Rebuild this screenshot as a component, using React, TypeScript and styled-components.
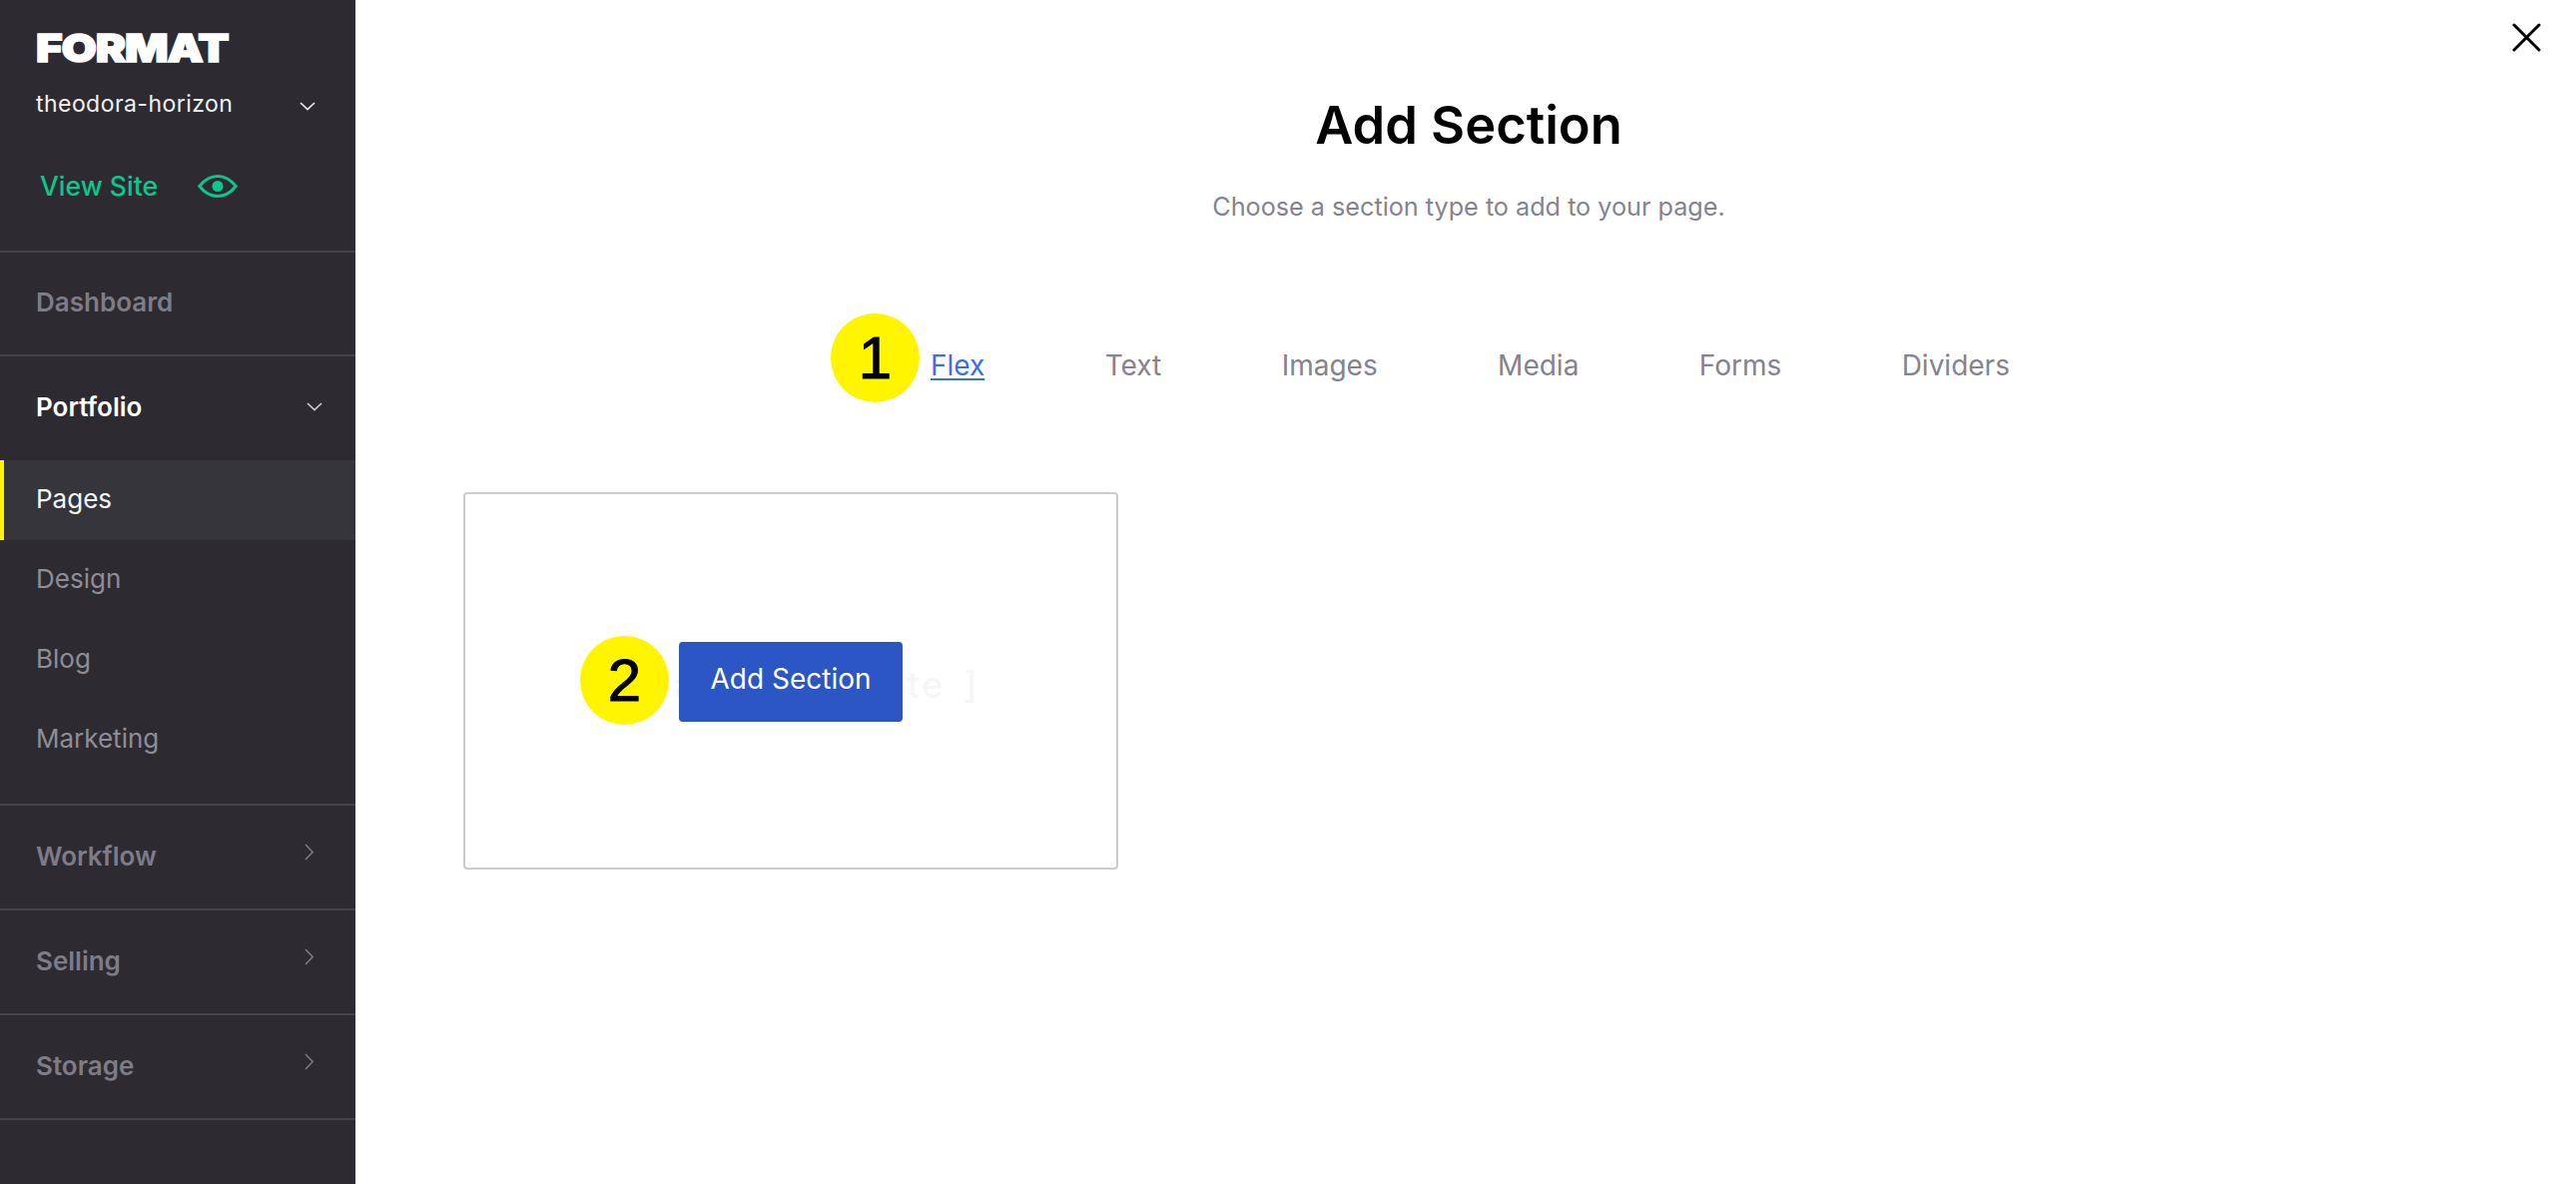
import React from "react";
import styled, { createGlobalStyle } from "styled-components";

const Global = createGlobalStyle`
  html, body { margin: 0; padding: 0; background: #fff; }
  body { font-family: Inter, "Liberation Sans", sans-serif; }
  * { box-sizing: border-box; }
`;

const Page = styled.div`
  display: flex;
  width: 2580px;
  height: 1186px;
  overflow: hidden;
  position: relative;
`;

const Sidebar = styled.aside`
  width: 356px;
  flex: none;
  height: 100%;
  background: #2d2b31;
  display: flex;
  flex-direction: column;
`;

const Brand = styled.div`
  height: 253px;
  border-bottom: 2px solid #45434a;
  padding: 28px 0 0 36px;
  display: flex;
  flex-direction: column;
`;

const Logo = styled.div`
  font-family: Inter, sans-serif;
  font-weight: 900;
  font-size: 39px;
  line-height: 40px;
  letter-spacing: -1px;
  color: #fff;
  -webkit-text-stroke: 1.5px #fff;
  transform: scaleX(1.17);
  transform-origin: left center;
`;

const SiteRow = styled.div`
  display: flex;
  align-items: center;
  justify-content: space-between;
  padding-right: 40px;
  margin-top: 16px;
  height: 40px;
  font-size: 23px;
  letter-spacing: 0.45px;
  color: #f2f2f3;
`;

const ViewRow = styled.div`
  display: flex;
  align-items: center;
  gap: 40px;
  margin: 46px 0 0 4px;
  font-size: 26.6px;
  font-weight: 500;
  color: #0cc68a;
`;

const Block = styled.div<{ $h: number }>`
  height: ${(p) => p.$h}px;
  flex: none;
  border-bottom: 2px solid #45434a;
  display: flex;
  align-items: center;
  justify-content: space-between;
  padding: 0 42px 3px 36px;
`;

const Head = styled.span<{ $on?: boolean }>`
  font-size: 26px;
  font-weight: 600;
  color: ${(p) => (p.$on ? "#fff" : "#7e7c88")};
`;

const Group = styled.div`
  flex: none;
  height: 450px;
  border-bottom: 2px solid #45434a;
  display: flex;
  flex-direction: column;
`;

const GroupHead = styled.div`
  height: 104px;
  flex: none;
  display: flex;
  align-items: center;
  justify-content: space-between;
  padding: 0 33px 3px 36px;
`;

const SubItem = styled.div<{ $on?: boolean }>`
  height: 80px;
  flex: none;
  display: flex;
  align-items: center;
  padding: 0 0 3px ${(p) => (p.$on ? "32px" : "36px")};
  font-size: 26px;
  color: ${(p) => (p.$on ? "#f5f5f6" : "#8f8d97")};
  background: ${(p) => (p.$on ? "#35353b" : "transparent")};
  border-left: ${(p) => (p.$on ? "4px solid #fff500" : "none")};
`;

const Main = styled.main`
  flex: 1;
  position: relative;
  padding: 0 108px;
  display: flex;
  flex-direction: column;
`;

const Title = styled.h1`
  margin: 96px 0 0 6px;
  text-align: center;
  font-size: 52.4px;
  line-height: 58px;
  font-weight: 600;
  color: #000;
`;

const Sub = styled.p`
  margin: 38px 0 0 6px;
  text-align: center;
  font-size: 25.2px;
  line-height: 30px;
  color: #84838f;
`;

const Tabs = styled.nav`
  margin: 128px 0 0 468px;
  display: flex;
  gap: 120.4px;
  position: relative;
`;

const Tab = styled.a<{ $on?: boolean }>`
  font-size: 28px;
  line-height: 32px;
  color: ${(p) => (p.$on ? "#3b6df0" : "#84838f")};
  text-decoration: ${(p) => (p.$on ? "underline" : "none")};
  text-underline-offset: 3px;
  text-decoration-thickness: 2px;
`;

const Card = styled.div`
  margin-top: 111px;
  width: 656px;
  height: 378px;
  border: 2px solid #cccccc;
  border-radius: 4px;
  position: relative;
  display: flex;
  align-items: center;
  justify-content: center;
  padding-top: 6px;
`;

const Placeholder = styled.span`
  font-size: 37px;
  font-weight: 500;
  letter-spacing: 2.4px;
  word-spacing: 6px;
  white-space: nowrap;
  color: #f6f6f7;
`;

const AddButton = styled.button`
  position: absolute;
  left: 214px;
  top: 148px;
  width: 224px;
  height: 80px;
  border: 0;
  border-radius: 4px;
  background: #2c56c4;
  color: #fff;
  font-family: inherit;
  font-size: 28px;
  font-weight: 400;
  padding: 0 0 6px;
`;

const Badge = styled.div<{ $x: number; $y: number }>`
  position: absolute;
  left: ${(p) => p.$x}px;
  top: ${(p) => p.$y}px;
  width: 89px;
  height: 89px;
  border-radius: 50%;
  background: #fff500;
  color: #000;
  display: flex;
  align-items: center;
  justify-content: center;
  font-family: "Liberation Sans", sans-serif;
  font-size: 60px;
  line-height: 1;
  -webkit-text-stroke: 1px #000;
`;

const Close = styled.button`
  position: absolute;
  right: 34px;
  top: 21px;
  width: 32px;
  height: 32px;
  padding: 0;
  border: 0;
  background: none;
`;

const IconGlyph = styled.svg<{ $mt?: number; $mb?: number }>`
  display: block;
  flex: none;
  margin-top: ${(p) => p.$mt ?? 0}px;
  margin-bottom: ${(p) => p.$mb ?? 0}px;
`;

const Down = ({ c = "#e8e8ea", mt = 0 }: { c?: string; mt?: number }) => (
  <IconGlyph $mt={mt} width="16" height="9" viewBox="0 0 16 9" fill="none">
    <path d="M1 1l7 6.5L15 1" stroke={c} strokeWidth="1.7" />
  </IconGlyph>
);

const Right = () => (
  <IconGlyph $mb={7} width="9" height="17" viewBox="0 0 9 17" fill="none">
    <path d="M1 1l7.2 7.5L1 16" stroke="#7e7c88" strokeWidth="1.5" />
  </IconGlyph>
);

const Eye = () => (
  <IconGlyph width="40" height="23" viewBox="0 0 40 23" fill="none">
    <path d="M1.8 11.5C7 4.8 13 1.5 20 1.5S33 4.8 38.2 11.5C33 18.2 27 21.5 20 21.5S7 18.2 1.8 11.5Z" stroke="#0cc68a" strokeWidth="3" />
    <circle cx="20" cy="11.5" r="5.5" fill="#0cc68a" />
  </IconGlyph>
);

const tabs = ["Text", "Images", "Media", "Forms", "Dividers"];
const subs = ["Design", "Blog", "Marketing"];
const closed = ["Workflow", "Selling", "Storage"];

export default function App() {
  return (
    <Page>
      <Global />
      <Sidebar>
        <Brand>
          <Logo>FORMAT</Logo>
          <SiteRow>
            theodora-horizon
            <Down mt={5} />
          </SiteRow>
          <ViewRow>
            View Site
            <Eye />
          </ViewRow>
        </Brand>
        <Block $h={104}>
          <Head>Dashboard</Head>
        </Block>
        <Group>
          <GroupHead>
            <Head $on>Portfolio</Head>
            <Down c="#c9c8cd" />
          </GroupHead>
          <SubItem $on>Pages</SubItem>
          {subs.map((s) => (
            <SubItem key={s}>{s}</SubItem>
          ))}
        </Group>
        {closed.map((s) => (
          <Block key={s} $h={105}>
            <Head>{s}</Head>
            <Right />
          </Block>
        ))}
      </Sidebar>
      <Main>
        <Title>Add Section</Title>
        <Sub>Choose a section type to add to your page.</Sub>
        <Tabs>
          <Tab $on>Flex</Tab>
          {tabs.map((t) => (
            <Tab key={t}>{t}</Tab>
          ))}
        </Tabs>
        <Card>
          <Placeholder>[ Blank Template ]</Placeholder>
          <AddButton>Add Section</AddButton>
        </Card>
        <Close aria-label="Close">
          <IconGlyph width="32" height="32" viewBox="0 0 32 32" fill="none">
            <path d="M4 4l25 25M29 4 4 29" stroke="#000" strokeWidth="3" strokeLinecap="round" />
          </IconGlyph>
        </Close>
      </Main>
      <Badge $x={832} $y={314}>1</Badge>
      <Badge $x={581} $y={637}>2</Badge>
    </Page>
  );
}
